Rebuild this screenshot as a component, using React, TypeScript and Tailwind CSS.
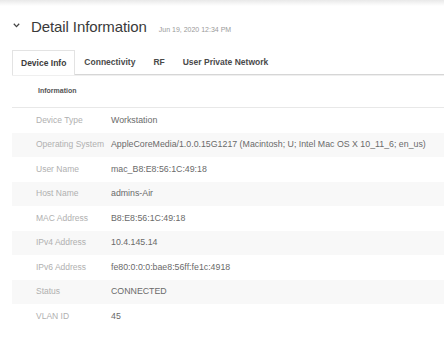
const TABS = ['Device Info', 'Connectivity', 'RF', 'User Private Network']

const ROWS = [
  { label: 'Device Type', value: 'Workstation' },
  { label: 'Operating System', value: 'AppleCoreMedia/1.0.0.15G1217 (Macintosh; U; Intel Mac OS X 10_11_6; en_us)' },
  { label: 'User Name', value: 'mac_B8:E8:56:1C:49:18' },
  { label: 'Host Name', value: 'admins-Air' },
  { label: 'MAC Address', value: 'B8:E8:56:1C:49:18' },
  { label: 'IPv4 Address', value: '10.4.145.14' },
  { label: 'IPv6 Address', value: 'fe80:0:0:0:bae8:56ff:fe1c:4918' },
  { label: 'Status', value: 'CONNECTED' },
  { label: 'VLAN ID', value: '45' },
]

export default function App() {
  return (
    <div className="w-[444px] h-[341px] overflow-hidden bg-white font-['Liberation_Sans',Arial,sans-serif]">
      {/* top edge shadow */}
      <div className="h-[6px] bg-gradient-to-b from-[#e9e9e9] to-white" />

      {/* Header */}
      <div className="flex items-baseline pl-[13px] mt-[11px] h-[20px]">
        <svg width="7" height="5" viewBox="0 0 7 5" className="mr-[11px] self-center -mt-[4px]">
          <path d="M0.8 0.8 L3.5 3.6 L6.2 0.8" fill="none" stroke="#444" strokeWidth="1.3" />
        </svg>
        <h1 className="text-[15px] leading-[20px] text-[#3a3a3a] tracking-[-0.1px]">Detail Information</h1>
        <span className="ml-[12px] text-[7px] text-[#9a9a9a]">Jun 19, 2020 12:34 PM</span>
      </div>

      {/* Tabs */}
      <div className="ml-[12px] mt-[13px] flex h-[25px] border-b border-[#d6d6d6] shadow-[0_1px_0_#efefef]">
        {TABS.map((t, i) => (
          <div
            key={t}
            className={
              i === 0
                ? 'px-[8px] flex items-center border border-b-0 border-[#e3e3e3] bg-white -mb-px text-[8.5px] font-bold text-[#3c3c3c]'
                : 'px-[9px] flex items-center text-[8.5px] font-bold text-[#4a4a4a]'
            }
          >
            {t}
          </div>
        ))}
      </div>

      {/* Section */}
      <div className="ml-[12px]">
        <div className="h-[33px] flex items-center pl-[26px] border-b border-[#e8e8e8] text-[7px] font-bold text-[#555]">
          Information
        </div>
        {ROWS.map((r, i) => (
          <div key={r.label} className={`h-[24.5px] flex items-center pl-[24px] text-[8.5px] ${i % 2 === 1 ? 'bg-[#f8f8f8]' : ''}`}>
            <span className="w-[75px] shrink-0 text-[#b0b0b0]">{r.label}</span>
            <span className="text-[8.8px] text-[#6a6a6a] whitespace-nowrap">{r.value}</span>
          </div>
        ))}
      </div>
    </div>
  )
}
